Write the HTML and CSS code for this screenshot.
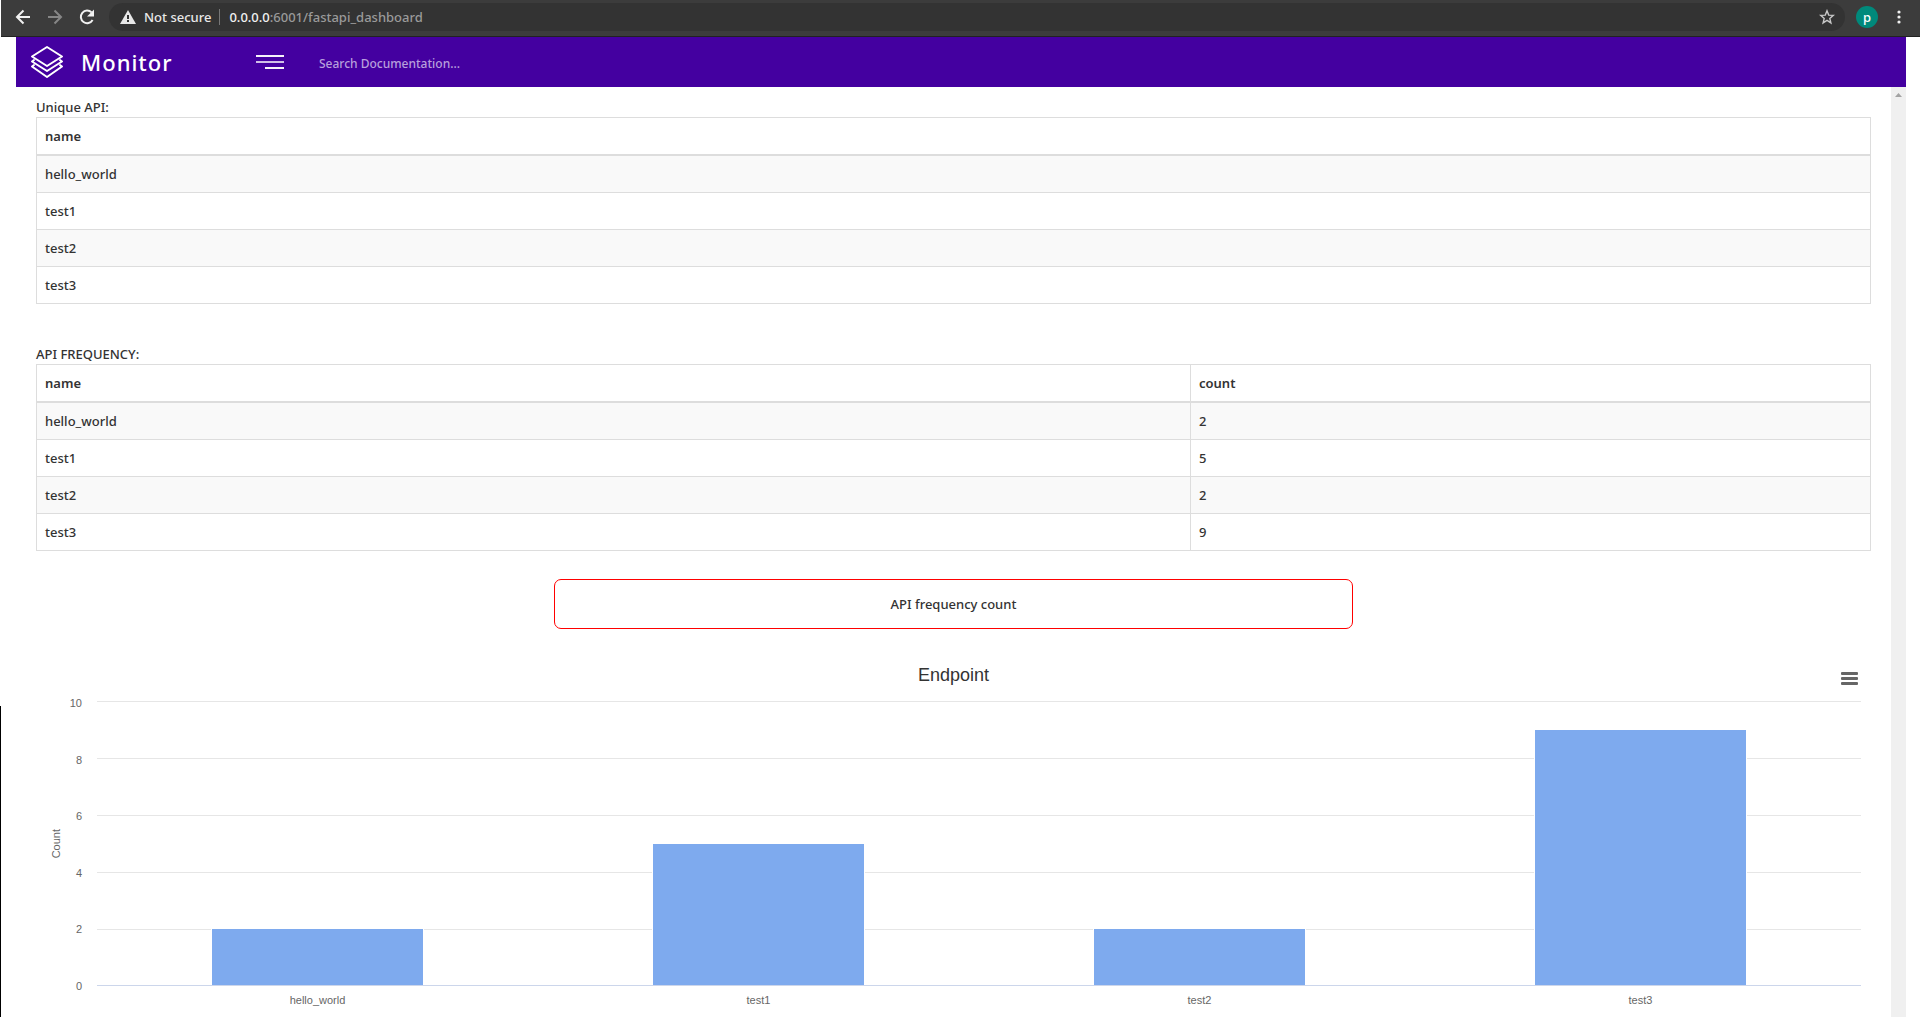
FILE: index.html
```html
<!DOCTYPE html>
<html lang="en">
<head>
<meta charset="utf-8">
<title>Monitor</title>
<link rel="stylesheet" href="styles.css">
</head>
<body>
<div class="browser">
  <button class="browser-btn" type="button" aria-label="Back"><svg width="16" height="16" viewBox="0 0 16 16"><path d="M15 8H2.500M8.500 1.500L2 8l6.500 6.500" fill="none" stroke="#f1f1f1" stroke-width="2"/></svg></button>
  <button class="browser-btn" type="button" aria-label="Forward"><svg width="16" height="16" viewBox="0 0 16 16"><path d="M1 8h12.500M7.500 1.500L14 8l-6.500 6.500" fill="none" stroke="#868686" stroke-width="2"/></svg></button>
  <button class="browser-btn" type="button" aria-label="Reload"><svg width="16" height="16" viewBox="0 0 16 16"><path d="M13.600 11A6.300 6.300 0 1 1 12.600 3.400" fill="none" stroke="#f1f1f1" stroke-width="2"/><path d="M15 .5v7H8z" fill="#f1f1f1"/></svg></button>
  <div class="address">
    <svg width="16" height="14" viewBox="0 0 16 14"><path d="M8 0l8 14H0z" fill="#e8e8e8"/><path d="M7 5h2v4H7zM7 10h2v2H7z" fill="#333"/></svg>
    <span class="security">Not secure</span>
    <span class="url"><span class="host">0.0.0.0</span>:6001/fastapi_dashboard</span>
    <button class="bookmark" type="button" aria-label="Bookmark"><svg width="16" height="16" viewBox="0 0 16 16"><path d="M8 1.800l1.700 4.300 4.600.3-3.500 3 1.100 4.500L8 11.400l-3.900 2.500 1.100-4.500-3.500-3 4.600-.3z" fill="none" stroke="#c8c8c8" stroke-width="1.400"/></svg></button>
  </div>
  <button class="avatar" type="button">p</button>
  <button class="browser-btn menu-dots" type="button" aria-label="Menu"><svg width="4" height="14" viewBox="0 0 4 14"><g fill="#f1f1f1"><circle cx="2" cy="2" r="1.600"/><circle cx="2" cy="7" r="1.600"/><circle cx="2" cy="12" r="1.600"/></g></svg></button>
</div>
<div class="page">
  <header class="topbar">
    <a class="brand" href="#">
      <svg width="34" height="34" viewBox="0 0 34 34" fill="none" stroke="#fff" stroke-width="2" stroke-linejoin="round" stroke-linecap="round"><path d="M17 2l15 9.500L17 21 2 11.500z"/><path d="M4 15l-2 1.500L17 26l15-9.500L30 15"/><path d="M4 20l-2 1.500L17 32l15-10.500L30 20"/></svg>
      <span class="brand-name">Monitor</span>
    </a>
    <button class="nav-toggle" type="button" aria-label="Toggle navigation"><span></span><span></span><span></span></button>
    <input class="search" type="text" placeholder="Search Documentation..." aria-label="Search Documentation">
  </header>
  <div class="body-row">
    <main class="content">
      <table class="data">
        <caption>Unique API:</caption>
        <thead><tr><th>name</th></tr></thead>
        <tbody>
          <tr><td>hello_world</td></tr>
          <tr><td>test1</td></tr>
          <tr><td>test2</td></tr>
          <tr><td>test3</td></tr>
        </tbody>
      </table>
      <table class="data">
        <caption>API FREQUENCY:</caption>
        <thead><tr><th class="col-name">name</th><th>count</th></tr></thead>
        <tbody>
          <tr><td>hello_world</td><td>2</td></tr>
          <tr><td>test1</td><td>5</td></tr>
          <tr><td>test2</td><td>2</td></tr>
          <tr><td>test3</td><td>9</td></tr>
        </tbody>
      </table>
      <h2 class="chart-label">API frequency count</h2>
      <section class="chart">
        <div class="chart-head">
          <h3>Endpoint</h3>
          <button class="chart-menu" type="button" aria-label="Chart menu"><span></span><span></span><span></span></button>
        </div>
        <div class="chart-grid">
          <div class="axis-title">Count</div>
          <div class="y-labels"><span>10</span><span>8</span><span>6</span><span>4</span><span>2</span><span>0</span></div>
          <div class="plot">
            <div class="slot"><div class="bar" style="height:20%"></div></div>
            <div class="slot"><div class="bar" style="height:50%"></div></div>
            <div class="slot"><div class="bar" style="height:20%"></div></div>
            <div class="slot"><div class="bar" style="height:90%"></div></div>
          </div>
          <div class="x-labels"><span>hello_world</span><span>test1</span><span>test2</span><span>test3</span></div>
        </div>
      </section>
    </main>
    <div class="scroll-track"><svg width="7" height="4" viewBox="0 0 7 4"><path d="M3.500 0L7 4H0z" fill="#a3a3a3"/></svg></div>
  </div>
</div>
</body>
</html>
```
FILE: styles.css
```css
* { box-sizing: border-box; }
body {
  margin: 0;
  min-height: 100vh;
  display: flex;
  flex-direction: column;
  background: #fff;
  color: #333;
  font: 500 13px/20px "Noto Sans", "Open Sans", sans-serif;
}
body::before {
  content: "";
  position: absolute;
  top: 706px;
  bottom: 0;
  left: 0;
  width: 1px;
  background: #000;
}
button { border: 0; padding: 0; background: none; font: inherit; cursor: pointer; }

.browser {
  display: flex;
  align-items: center;
  height: 37px;
  margin-left: 1px;
  padding: 0 19px 2px 14px;
  background: #3c3c3c;
  border-bottom: 1px solid #222;
}
.browser-btn { display: flex; margin-right: 16px; }
.address {
  flex: 1;
  display: flex;
  align-items: center;
  height: 28px;
  margin: 0 11px 0 -2px;
  padding: 0 10px 0 11px;
  border-radius: 14px;
  background: #333;
  color: #9a9a9a;
}
.security { margin-left: 8px; padding-right: 8px; border-right: 1px solid #777; line-height: 16px; color: #e8e8e8; }
.url { flex: 1; padding-left: 9px; }
.host { color: #f1f1f1; }
.bookmark { display: flex; }
.avatar { width: 22px; height: 22px; border-radius: 50%; background: #00897b; color: #fff; line-height: 20px; }
.menu-dots { margin: 0 0 0 19px; }

.page { flex: 1; display: flex; flex-direction: column; margin: 0 14px 0 16px; }
.topbar { display: flex; align-items: center; height: 50px; padding-left: 14px; background: #4400a0; }
.brand { display: flex; align-items: center; gap: 17px; width: 226px; color: #fff; text-decoration: none; }
.brand-name { font-size: 22px; line-height: 30px; letter-spacing: 1px; }
.nav-toggle { display: flex; flex-direction: column; align-items: flex-end; gap: 4px; width: 28px; }
.nav-toggle span { width: 28px; height: 2px; background: #f6f2fa; }
.nav-toggle span:nth-child(2) { background: #d0bfe7; }
.nav-toggle span:last-child { width: 19px; }
.search { flex: 1; margin-left: 35px; padding: 3px 0 0; border: 0; outline: 0; background: none; color: #fff; font: inherit; font-size: 12px; }
.search::placeholder { color: #b79fdc; opacity: 1; }

.body-row { flex: 1; display: flex; }
.content { flex: 1; padding: 10px 20px 0; }
.scroll-track { display: flex; justify-content: center; width: 15px; padding-top: 6px; background: #f0f0f0; }

.data {
  width: 100%;
  margin-bottom: 40px;
  border: solid #ddd;
  border-width: 1px 0 0 1px;
  border-spacing: 0;
}
.data + .data { margin-bottom: 28px; }
.data caption { text-align: left; }
.data th, .data td { padding: 8px; border: solid #ddd; border-width: 0 1px 1px 0; text-align: left; }
.data th { border-bottom-width: 2px; font-weight: 600; }
.data tbody tr:nth-child(odd) { background: #f9f9f9; }
.data .col-name { width: 1154px; }

.chart-label {
  width: 799px;
  max-width: 100%;
  height: 50px;
  margin: 0 auto;
  border: 1px solid #f00;
  border-radius: 7px;
  font: inherit;
  line-height: 48px;
  text-align: center;
}

.chart { margin-top: 28px; padding: 0 10px; color: #666; font: 11px/14px "Liberation Sans", Arial, sans-serif; }
.chart-head { display: grid; grid-template-columns: 1fr auto 1fr; align-items: center; height: 44px; }
.chart-head h3 { grid-column: 2; margin: 0; padding-bottom: 8px; color: #333; font-size: 18px; line-height: 22px; font-weight: 400; }
.chart-menu { display: flex; flex-direction: column; gap: 2px; justify-self: end; width: 17px; margin: 0 3px 2px 0; }
.chart-menu span { height: 3px; border-radius: 1px; background: #666; }
.chart-grid { display: grid; grid-template-columns: 20px 16px 1fr; grid-template-rows: 285px auto; column-gap: 0; }
.axis-title { align-self: center; justify-self: center; writing-mode: vertical-rl; rotate: 180deg; }
.y-labels { display: flex; flex-direction: column; justify-content: space-between; margin: -5px 0 -7px; text-align: right; }
.plot {
  display: flex;
  margin-left: 15px;
  border-bottom: 1px solid #ccd6eb;
  background: linear-gradient(#e6e6e6 1px, transparent 1px) 0 0 / 100% 20% border-box;
}
.slot { flex: 1; display: flex; align-items: flex-end; justify-content: center; }
.bar { width: 213px; max-width: 80%; border: 1px solid #fff; border-bottom: 0; background: #7eaaee; }
.x-labels { grid-column: 3; display: flex; margin-left: 15px; padding-top: 7px; }
.x-labels span { flex: 1; text-align: center; }
```
